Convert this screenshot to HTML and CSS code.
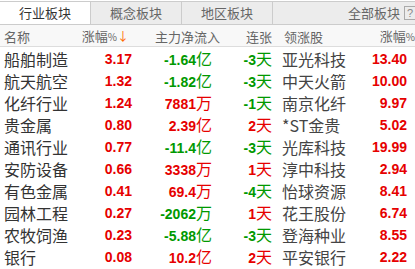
FILE: index.html
```html
<!DOCTYPE html>
<html lang="zh-CN">
<head>
    <meta charset="UTF-8">
    <title>板块行情</title>
    <link rel="stylesheet" href="styles.css">
</head>
<body>
    <div class="panel">
        <!-- Tabs -->
        <div class="tabs">
            <div class="tab active">行业板块</div>
            <div class="tab">概念板块</div>
            <div class="tab">地区板块</div>
            <div class="tab-rest">全部板块<span class="help">?</span></div>
        </div>

        <!-- Table header -->
        <div class="row head">
            <div class="c-name">名称</div>
            <div class="c-chg">涨幅<span class="pct">%</span><span class="arrow">↓</span></div>
            <div class="c-flow">主力净流入</div>
            <div class="c-days">连张</div>
            <div class="c-lead">领涨股</div>
            <div class="c-lchg">涨幅<span class="pct">%</span></div>
        </div>

        <div class="row">
            <div class="c-name">船舶制造</div>
            <div class="c-chg num up">3.17</div>
            <div class="c-flow num down">-1.64<span class="unit">亿</span></div>
            <div class="c-days num down">-3<span class="unit">天</span></div>
            <div class="c-lead">亚光科技</div>
            <div class="c-lchg num up">13.40</div>
        </div>
        <div class="row">
            <div class="c-name">航天航空</div>
            <div class="c-chg num up">1.32</div>
            <div class="c-flow num down">-1.82<span class="unit">亿</span></div>
            <div class="c-days num down">-3<span class="unit">天</span></div>
            <div class="c-lead">中天火箭</div>
            <div class="c-lchg num up">10.00</div>
        </div>
        <div class="row">
            <div class="c-name">化纤行业</div>
            <div class="c-chg num up">1.24</div>
            <div class="c-flow num up">7881<span class="unit">万</span></div>
            <div class="c-days num down">-1<span class="unit">天</span></div>
            <div class="c-lead">南京化纤</div>
            <div class="c-lchg num up">9.97</div>
        </div>
        <div class="row">
            <div class="c-name">贵金属</div>
            <div class="c-chg num up">0.80</div>
            <div class="c-flow num up">2.39<span class="unit">亿</span></div>
            <div class="c-days num up">2<span class="unit">天</span></div>
            <div class="c-lead">*ST金贵</div>
            <div class="c-lchg num up">5.02</div>
        </div>
        <div class="row">
            <div class="c-name">通讯行业</div>
            <div class="c-chg num up">0.77</div>
            <div class="c-flow num down">-11.4<span class="unit">亿</span></div>
            <div class="c-days num down">-3<span class="unit">天</span></div>
            <div class="c-lead">光库科技</div>
            <div class="c-lchg num up">19.99</div>
        </div>
        <div class="row">
            <div class="c-name">安防设备</div>
            <div class="c-chg num up">0.66</div>
            <div class="c-flow num up">3338<span class="unit">万</span></div>
            <div class="c-days num up">1<span class="unit">天</span></div>
            <div class="c-lead">淳中科技</div>
            <div class="c-lchg num up">2.94</div>
        </div>
        <div class="row">
            <div class="c-name">有色金属</div>
            <div class="c-chg num up">0.41</div>
            <div class="c-flow num up">69.4<span class="unit">万</span></div>
            <div class="c-days num down">-4<span class="unit">天</span></div>
            <div class="c-lead">怡球资源</div>
            <div class="c-lchg num up">8.41</div>
        </div>
        <div class="row">
            <div class="c-name">园林工程</div>
            <div class="c-chg num up">0.27</div>
            <div class="c-flow num down">-2062<span class="unit">万</span></div>
            <div class="c-days num up">1<span class="unit">天</span></div>
            <div class="c-lead">花王股份</div>
            <div class="c-lchg num up">6.74</div>
        </div>
        <div class="row">
            <div class="c-name">农牧饲渔</div>
            <div class="c-chg num up">0.23</div>
            <div class="c-flow num down">-5.88<span class="unit">亿</span></div>
            <div class="c-days num down">-3<span class="unit">天</span></div>
            <div class="c-lead">登海种业</div>
            <div class="c-lchg num up">8.55</div>
        </div>
        <div class="row">
            <div class="c-name">银行</div>
            <div class="c-chg num up">0.08</div>
            <div class="c-flow num up">10.2<span class="unit">亿</span></div>
            <div class="c-days num up">2<span class="unit">天</span></div>
            <div class="c-lead">平安银行</div>
            <div class="c-lchg num up">2.22</div>
        </div>
    </div>
</body>
</html>
```

FILE: styles.css
```css
body {
    margin: 0;
    background-color: #ffffff;
    font-family: "Noto Sans CJK SC", sans-serif;
    color: #333333;
    overflow: hidden;
}

.panel {
    width: 415px;
    margin-top: 1px;
    border-top: 1px solid #cccccc;
}

/* Tabs */
.tabs {
    display: flex;
    height: 22px;
    border-bottom: 1px solid #cccccc;
    background-color: #ececec;
    font-size: 13px;
    line-height: 22px;
    color: #666666;
}

.tab {
    width: 90px;
    flex: none;
    text-align: center;
    border-right: 1px solid #cccccc;
}

.tab.active {
    background-color: #ffffff;
    color: #333333;
}

.tab-rest {
    flex: 1;
    display: flex;
    justify-content: flex-end;
    align-items: center;
    gap: 4px;
    color: #666666;
}

.help {
    width: 11px;
    height: 14px;
    border: 1px solid #aaaaaa;
    border-right: none;
    box-sizing: border-box;
    font-family: "Liberation Sans", sans-serif;
    font-size: 11px;
    line-height: 12px;
    text-align: center;
    color: #888888;
}

/* Table rows */
.row {
    display: grid;
    grid-template-columns: 76px 60px 86px 54px 74px 65px;
    height: 22px;
    align-items: center;
    font-size: 16px;
    line-height: 22px;
    white-space: nowrap;
}

.row.head {
    height: 21px;
    line-height: 21px;
    font-size: 13px;
    color: #666666;
    background-color: #f8f8f8;
    border-bottom: 1px solid #dddddd;
}

.c-name { padding-left: 4px; }
.c-chg { text-align: right; padding-right: 4px; }
.c-flow { text-align: right; padding-right: 10px; }
.c-days { text-align: right; padding-right: 4px; }
.c-lead { padding-left: 6px; color: #444444; }
.c-lchg { text-align: right; padding-right: 8px; }

.head .c-chg { padding-right: 7px; }
.head .c-flow { padding-right: 2px; }
.head .c-lead { padding-left: 8px; color: #666666; }
.head .c-lchg { padding-right: 0; }

.pct {
    font-size: 10px;
}

.arrow {
    color: #ff6600;
    font-size: 12px;
}

/* Numbers */
.num {
    font-family: "Liberation Sans", sans-serif;
    font-weight: bold;
    font-size: 14px;
}

.unit {
    font-family: "Noto Sans CJK SC", sans-serif;
    font-weight: normal;
    font-size: 16px;
}

.up { color: #e60000; }
.down { color: #009900; }
```
